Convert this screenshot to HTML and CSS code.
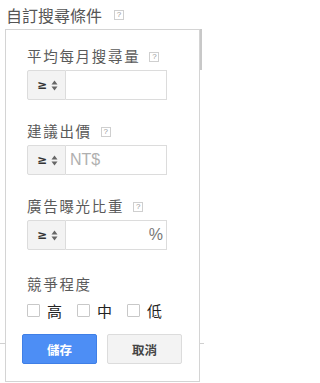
FILE: index.html
```html
<!DOCTYPE html>
<html lang="zh-Hant">
<head>
<meta charset="utf-8">
<link rel="stylesheet" href="styles.css">
</head>
<body>
<div class="page">
  <div class="title">自訂搜尋條件<span class="help">?</span></div>
  <div class="panel">
    <div class="field">
      <div class="label">平均每月搜尋量<span class="help">?</span></div>
      <div class="control">
        <div class="op"><span class="ge">≥</span><svg class="arrows" width="7" height="13" viewBox="0 0 7 13"><path d="M0.5 5.5 L3.5 1.5 L6.5 5.5 Z M0.5 7.5 L3.5 11.5 L6.5 7.5 Z" fill="#666"/></svg></div>
        <div class="input"></div>
      </div>
    </div>
    <div class="field">
      <div class="label">建議出價<span class="help">?</span></div>
      <div class="control">
        <div class="op"><span class="ge">≥</span><svg class="arrows" width="7" height="13" viewBox="0 0 7 13"><path d="M0.5 5.5 L3.5 1.5 L6.5 5.5 Z M0.5 7.5 L3.5 11.5 L6.5 7.5 Z" fill="#666"/></svg></div>
        <div class="input"><span class="placeholder">NT$</span></div>
      </div>
    </div>
    <div class="field">
      <div class="label">廣告曝光比重<span class="help">?</span></div>
      <div class="control">
        <div class="op"><span class="ge">≥</span><svg class="arrows" width="7" height="13" viewBox="0 0 7 13"><path d="M0.5 5.5 L3.5 1.5 L6.5 5.5 Z M0.5 7.5 L3.5 11.5 L6.5 7.5 Z" fill="#666"/></svg></div>
        <div class="input input-right"><span class="suffix">%</span></div>
      </div>
    </div>
    <div class="field-comp">
      <div class="label">競爭程度</div>
      <div class="checks">
        <label class="check"><span class="box"></span><span class="ctext">高</span></label>
        <label class="check"><span class="box"></span><span class="ctext">中</span></label>
        <label class="check"><span class="box"></span><span class="ctext">低</span></label>
      </div>
    </div>
    <div class="buttons">
      <button class="btn btn-save">儲存</button>
      <button class="btn btn-cancel">取消</button>
    </div>
  </div>
  <div class="bg-line-h"></div>
  <div class="bg-line-v"></div>
</div>
</body>
</html>
```

FILE: styles.css
```css
html, body {
  margin: 0;
  padding: 0;
  background: #fff;
}
body {
  font-family: "Noto Sans CJK TC", "Noto Sans", sans-serif;
  color: #555;
}
.page {
  position: relative;
  width: 204px;
  height: 383px;
  overflow: hidden;
}
.title {
  padding: 4px 0 0 6px;
  height: 25px;
  box-sizing: border-box;
  font-size: 16px;
  line-height: 20px;
  color: #555;
  display: flex;
  align-items: center;
}
.title .help {
  margin-left: 12px;
  margin-top: 1px;
}
.help {
  display: inline-flex;
  align-items: center;
  justify-content: center;
  box-sizing: border-box;
  width: 10px;
  height: 10px;
  border: 1px solid #cfcfcf;
  font-family: "Liberation Sans", sans-serif;
  font-size: 8px;
  line-height: 8px;
  color: #999;
  letter-spacing: 0;
}
.panel {
  position: relative;
  z-index: 1;
  box-sizing: border-box;
  margin: 4px 0 0 5px;
  width: 195px;
  height: 353px;
  border: 1px solid #d4d4d4;
  background: #fff;
  padding: 17px 0 0 21px;
  display: flex;
  flex-direction: column;
}
.field {
  display: flex;
  flex-direction: column;
  height: 75px;
}
.label {
  display: flex;
  align-items: center;
  font-size: 14.5px;
  line-height: 18px;
  height: 18px;
  letter-spacing: 1.7px;
  color: #5a5a5a;
}
.label .help {
  margin-left: 9px;
  margin-top: 2px;
}
.control {
  display: flex;
  margin-top: 5px;
  height: 30px;
}
.op {
  box-sizing: border-box;
  width: 39px;
  height: 30px;
  background: #f3f3f3;
  border: 1px solid #dcdcdc;
  border-radius: 2px 0 0 2px;
  display: flex;
  align-items: center;
  padding-left: 9px;
}
.ge {
  font-family: "DejaVu Sans", sans-serif;
  font-weight: bold;
  font-size: 12px;
  color: #333;
  width: 14px;
}
.arrows {
  display: block;
}
.input {
  box-sizing: border-box;
  width: 101px;
  height: 30px;
  border: 1px solid #dcdcdc;
  border-left: none;
  display: flex;
  align-items: center;
  padding: 0 3px 0 4px;
  font-family: "Liberation Sans", sans-serif;
  font-size: 16px;
}
.input-right {
  justify-content: flex-end;
}
.placeholder {
  color: #b0b0b0;
}
.suffix {
  color: #777;
  font-size: 16px;
}
.field-comp {
  display: flex;
  flex-direction: column;
  padding-top: 3px;
}
.checks {
  display: flex;
  margin-top: 7px;
  height: 20px;
  align-items: center;
}
.check {
  display: flex;
  align-items: center;
  width: 50px;
}
.box {
  box-sizing: border-box;
  width: 13px;
  height: 13px;
  border: 1px solid #c8c8c8;
  border-radius: 1px;
  background: #fff;
}
.ctext {
  margin-left: 7px;
  font-size: 15px;
  color: #222;
}
.buttons {
  display: flex;
  gap: 10px;
  margin-left: -5px;
  margin-top: 14px;
}
.btn {
  box-sizing: border-box;
  width: 75px;
  height: 30px;
  border-radius: 2px;
  font-family: "Noto Sans CJK TC", sans-serif;
  font-weight: bold;
  font-size: 12.5px;
  padding: 0;
  cursor: pointer;
}
.btn-save {
  background: #4d8ef5;
  border: 1px solid #3f7fe6;
  color: #fff;
}
.btn-cancel {
  background: #f3f3f3;
  border: 1px solid #dcdcdc;
  color: #444;
}
.bg-line-h {
  position: absolute;
  left: 0;
  right: 0;
  top: 343px;
  height: 1px;
  background: #d0d0d0;
}
.bg-line-v {
  position: absolute;
  left: 200px;
  top: 29px;
  width: 2px;
  height: 41px;
  background: #c8c8c8;
}
```
